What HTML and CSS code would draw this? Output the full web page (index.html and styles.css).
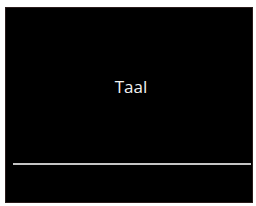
FILE: index.html
```
<!DOCTYPE html>
<html>
<head>
<meta charset="utf-8">
<link rel="stylesheet" href="styles.css">
</head>
<body>
<div class="screen">
  <div class="title">Taal</div>
  <div class="divider"></div>
</div>
</body>
</html>
```
FILE: styles.css
```
html, body {
  margin: 0;
  padding: 0;
  background: #ffffff;
  width: 256px;
  height: 206px;
  overflow: hidden;
}
body {
  padding: 7px 3px 3px 5px;
  box-sizing: border-box;
}
.screen {
  width: 248px;
  height: 196px;
  box-sizing: border-box;
  background: #000;
  border: 1px solid #2a1c1c;
  display: flex;
  flex-direction: column;
  align-items: stretch;
}
.title {
  margin-top: 68px;
  text-align: center;
  color: #f2f2f2;
  font-family: "Open Sans", "DejaVu Sans", sans-serif;
  font-size: 17px;
  line-height: 22px;
  padding-left: 4px;
}
.divider {
  margin: 65px 1px 0 7px;
  height: 2px;
  background: #c4c4c4;
}
```
